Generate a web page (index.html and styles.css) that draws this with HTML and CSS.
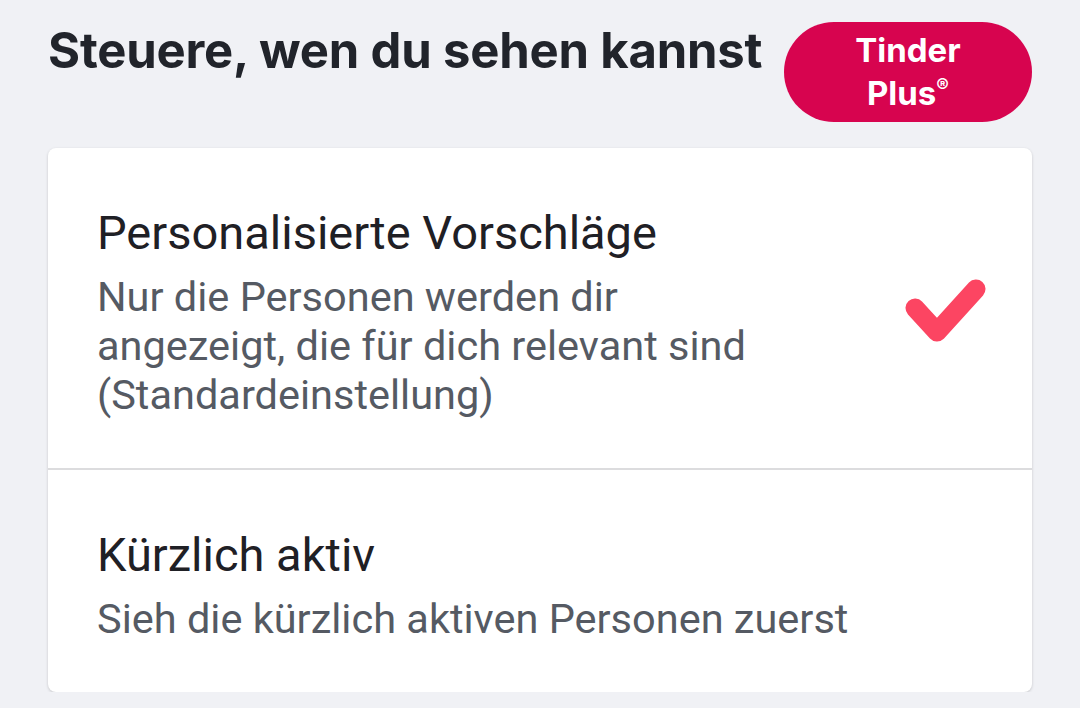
FILE: index.html
```html
<!DOCTYPE html>
<html lang="de">
<head>
<meta charset="utf-8">
<link rel="stylesheet" href="styles.css">
</head>
<body>
<div class="page">
  <header class="header">
    <h1 class="heading">Steuere, wen du sehen kannst</h1>
    <div class="badge"><span class="badge-text">Tinder<br>Plus<sup class="reg">®</sup></span></div>
  </header>
  <section class="card">
    <div class="row">
      <div class="text">
        <div class="title">Personalisierte Vorschläge</div>
        <div class="desc">Nur die Personen werden dir angezeigt, die für dich relevant sind (Standardeinstellung)</div>
      </div>
      <svg class="check" width="86" height="66" viewBox="0 0 86 66">
        <polyline points="12,30 34,54 73,11" fill="none" stroke="#fc4562" stroke-width="19" stroke-linecap="round" stroke-linejoin="round"/>
      </svg>
    </div>
    <div class="row">
      <div class="text">
        <div class="title">Kürzlich aktiv</div>
        <div class="desc">Sieh die kürzlich aktiven Personen zuerst</div>
      </div>
    </div>
  </section>
</div>
</body>
</html>
```

FILE: styles.css
```css
html, body {
  margin: 0;
  padding: 0;
  background: #f0f1f5;
}
.page {
  padding: 22px 48px 0 48px;
}
.header {
  display: flex;
  align-items: flex-start;
  justify-content: space-between;
}
.heading {
  margin: 4px 0 0 0;
  font-family: Inter, "Noto Sans", sans-serif;
  font-weight: 700;
  font-size: 49px;
  letter-spacing: -0.2px;
  color: #21242b;
  line-height: 49px;
}
.badge {
  width: 248px;
  height: 100px;
  box-sizing: border-box;
  border-radius: 50px;
  background: #d7044f;
  color: #ffffff;
  font-family: Inter, "Noto Sans", sans-serif;
  font-weight: 700;
  font-size: 33px;
  line-height: 43px;
  display: flex;
  align-items: center;
  justify-content: center;
}
.badge-text {
  display: block;
  text-align: center;
}
.reg {
  font-size: 19px;
  line-height: 0;
  vertical-align: 13px;
}
.card {
  margin-top: 26px;
  background: #ffffff;
  border-radius: 8px;
  box-shadow: 0 1px 3px rgba(0, 0, 0, 0.18);
}
.row {
  display: flex;
  align-items: center;
  padding: 59px 43px 49px 49px;
}
.row + .row {
  border-top: 2px solid #dcdcde;
}
.text {
  flex: 1;
  min-width: 0;
}
.title {
  font-family: Roboto, "Noto Sans", sans-serif;
  font-size: 47px;
  line-height: 52px;
  color: #1f2025;
}
.desc {
  margin-top: 13px;
  font-family: Roboto, "Noto Sans", sans-serif;
  font-size: 41.5px;
  line-height: 49px;
  color: #555a63;
}
.check {
  flex: none;
  margin-left: 120px;
  margin-bottom: 4px;
  display: block;
}
```
